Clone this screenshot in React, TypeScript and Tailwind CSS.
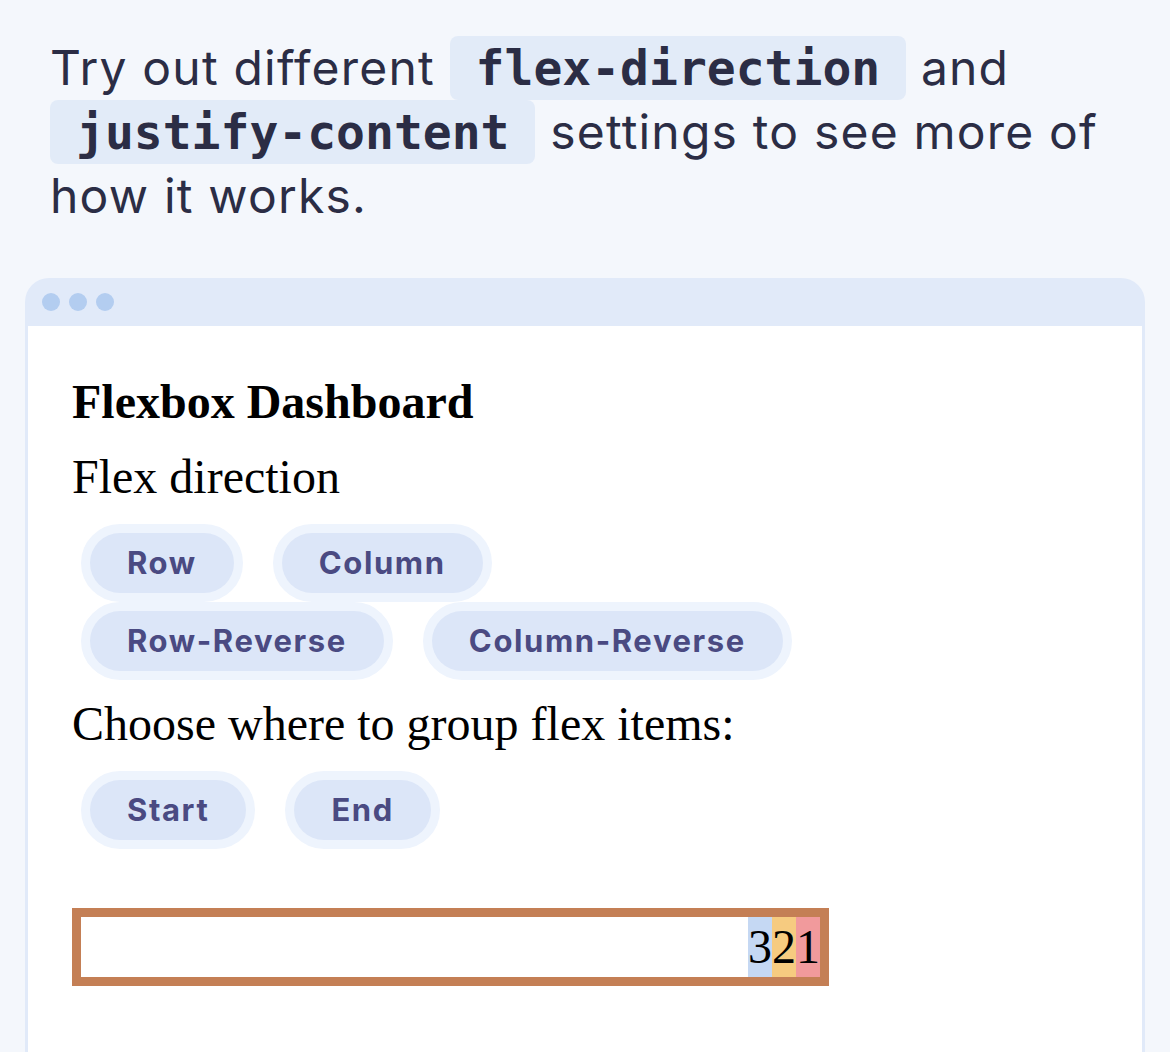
import React from "react";

const serif = { fontFamily: '"Liberation Serif", "Times New Roman", serif' };

function Btn({ label }: { label: string }) {
  return (
    <div className="rounded-full border-[9px] border-[#eef4fd] bg-[#eef4fd]">
      <button
        className="h-[60px] rounded-full bg-[#dce6f8] px-[37px] text-[31px] font-bold tracking-[1.6px] text-[#4a4a82]"
        style={{ fontFamily: 'Inter, "Liberation Sans", sans-serif' }}
      >
        {label}
      </button>
    </div>
  );
}

function Code({ children }: { children: React.ReactNode }) {
  return (
    <code
      className="rounded-[8px] bg-[#e2ebf8] px-[26px] py-[4px] text-[48px] font-bold text-[#2b2d45]"
      style={{ fontFamily: '"DejaVu Sans Mono", "Liberation Mono", monospace', letterSpacing: "0px" }}
    >
      {children}
    </code>
  );
}

export default function App() {
  return (
    <div className="min-h-screen bg-[#f4f7fc] px-[25px] pt-[36px]">
      <p
        className="px-[25px] text-[48px] leading-[64px] text-[#2b2d45]"
        style={{ fontFamily: 'Inter, "Noto Sans", sans-serif', letterSpacing: "1.2px" }}
      >
        Try out different <Code>flex-direction</Code> and <Code>justify-content</Code> settings to see more of how it works.
      </p>

      <div className="mt-[50px] rounded-t-[24px] bg-[#e1eaf9] px-[3px]">
        <div className="flex h-[48px] items-center gap-[9px] pl-[14px]">
          <span className="h-[18px] w-[18px] rounded-full bg-[#b3cdf0]" />
          <span className="h-[18px] w-[18px] rounded-full bg-[#b3cdf0]" />
          <span className="h-[18px] w-[18px] rounded-full bg-[#b3cdf0]" />
        </div>
        <div className="bg-white pb-[120px] pl-[44px] pt-[48px] text-black" style={serif}>
          <div className="text-[48px] font-bold leading-[55px]">Flexbox Dashboard</div>
          <div className="mt-[20px] text-[48px] leading-[55px]">Flex direction</div>
          <div className="mt-[20px] flex flex-col">
            <div className="flex gap-[30px] pl-[9px]">
              <Btn label="Row" />
              <Btn label="Column" />
            </div>
            <div className="flex gap-[30px] pl-[9px]">
              <Btn label="Row-Reverse" />
              <Btn label="Column-Reverse" />
            </div>
          </div>
          <div className="mt-[16px] text-[48px] leading-[55px]">Choose where to group flex items:</div>
          <div className="mt-[20px] flex gap-[30px] pl-[9px]">
            <Btn label="Start" />
            <Btn label="End" />
          </div>
          <div className="mt-[59px] flex h-[78px] w-[757px] flex-row-reverse border-[9px] border-[#c47f55] bg-white">
            <div className="bg-[#f19a9c] text-[48px] leading-[60px]">1</div>
            <div className="bg-[#f6cb80] text-[48px] leading-[60px]">2</div>
            <div className="bg-[#c5d8f3] text-[48px] leading-[60px]">3</div>
          </div>
        </div>
      </div>
    </div>
  );
}
